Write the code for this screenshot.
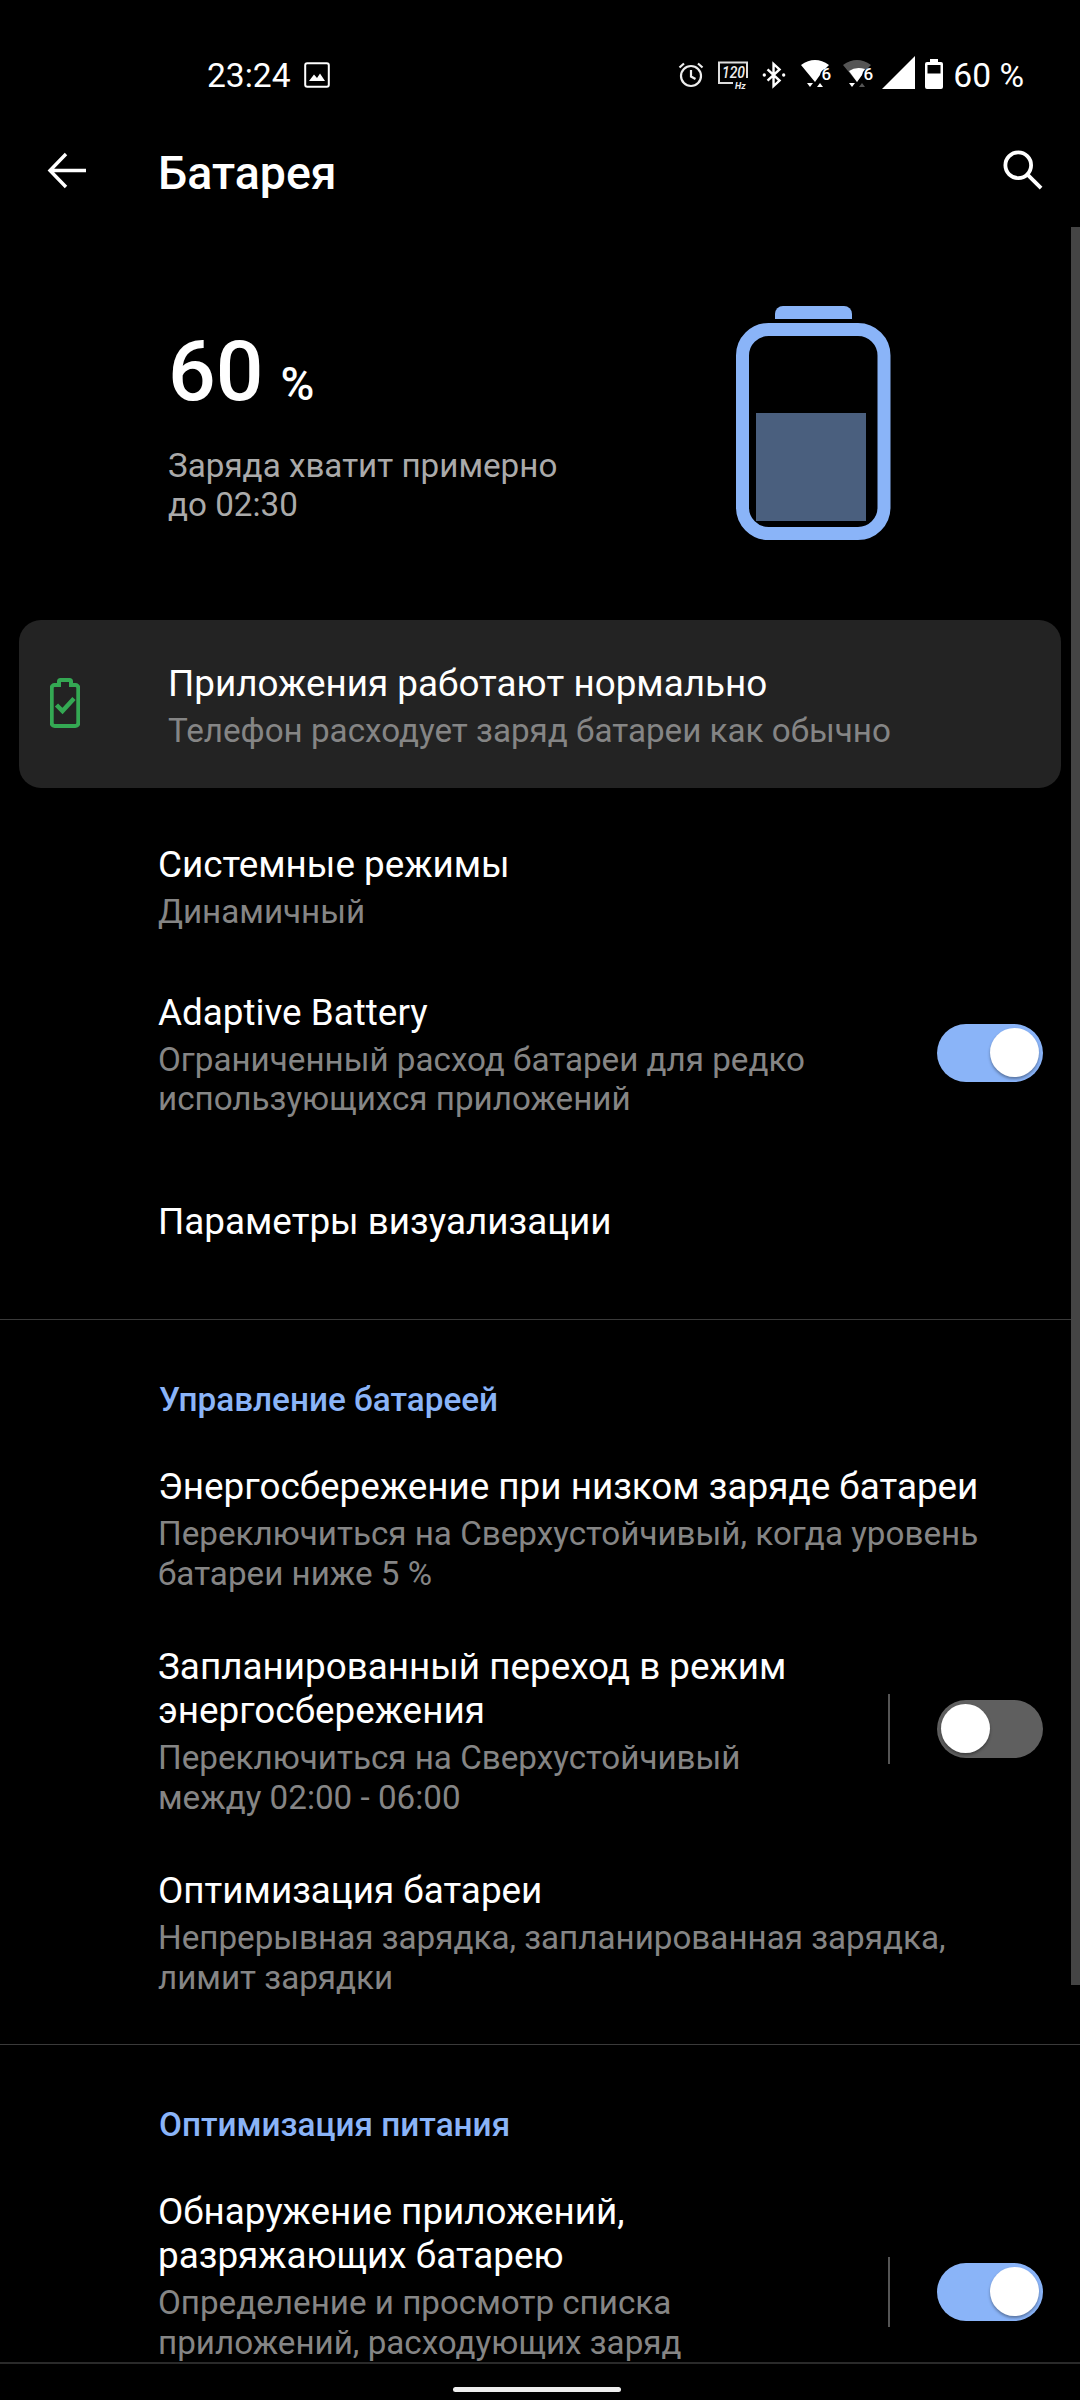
<div class="page">
  <header class="status">
    <div class="status-left">
      <span class="time">23:24</span>
      <svg class="ic-image" viewBox="0 0 26 26" width="26" height="26">
        <rect x="1.2" y="1.2" width="23.6" height="23.6" rx="2" fill="none" stroke="#fff" stroke-width="2"/>
        <path d="M5 19 L10 12.5 L13 16 L16 11.5 L21 19 Z" fill="#fff"/>
      </svg>
    </div>
    <div class="status-right">
      <svg class="s-alarm" viewBox="0 0 26 28" width="26" height="28" fill="none" stroke="#eee" stroke-width="2.2">
        <circle cx="13" cy="15" r="10"/>
        <path d="M13 9v6.5l4.500 2.500M1.500 6.500 6 2.500M24.500 6.500 20 2.500"/>
      </svg>
      <svg class="s-hz" viewBox="0 0 30 28" width="30" height="28">
        <path d="M15 22H1V1.500h28V17" fill="none" stroke="#ddd" stroke-width="2"/>
        <text x="4" y="17" class="t120" textLength="23" lengthAdjust="spacingAndGlyphs">120</text>
        <text x="17" y="27.500" class="thz">Hz</text>
      </svg>
      <svg class="s-bt" viewBox="0 0 26 28" width="24" height="26" fill="none" stroke="#fff" stroke-width="2.6">
        <path d="M6 8 L19 20 L12.500 26 V2 L19 8 L6 20"/>
        <circle cx="2.500" cy="14" r="1.800" fill="#fff" stroke="none"/>
        <circle cx="23.500" cy="14" r="1.800" fill="#fff" stroke="none"/>
      </svg>
      <svg class="s-wifi" viewBox="0 0 30 32" width="30" height="32">
        <path d="M0 7 Q14 -3 28 7 L24 11 Q20 12 19 17 L14 24 Z" fill="#fff"/>
        <text x="20.500" y="22" class="t6">6</text>
        <path d="M6 25h6l-3 4zM16 29l3-4 3 4z" fill="#fff"/>
      </svg>
      <svg class="s-wifi2" viewBox="0 0 30 32" width="30" height="32">
        <path d="M0 7 Q14 -3 28 7 L24 11 Q20 12 19 17 L14 24 Z" fill="#555"/>
        <path d="M6 13 Q13 8 22 11 Q20 13 19 17 L14 24 Z" fill="#fff"/>
        <text x="20.500" y="22" class="t6">6</text>
        <path d="M6 25h6l-3 4z" fill="#fff"/>
        <path d="M16 29l3-4 3 4z" fill="#555"/>
      </svg>
      <svg class="s-signal" viewBox="0 0 33 33" width="33" height="33"><path d="M0 33 L33 0 V33 Z" fill="#fff"/></svg>
      <svg class="s-batt" viewBox="0 0 18 30" width="18" height="30">
        <path d="M5 0h8v3h3a2 2 0 0 1 2 2v23a2 2 0 0 1-2 2H2a2 2 0 0 1-2-2V5a2 2 0 0 1 2-2h3z" fill="#fff"/>
        <rect x="2.500" y="6" width="13" height="8.500" fill="#000"/>
      </svg>
      <span class="pct">60 %</span>
    </div>
  </header>

  <div class="toolbar">
    <svg class="back" viewBox="0 0 40 40" width="40" height="40" fill="none" stroke="#fff" stroke-width="3.4">
      <path d="M39 19.500H3M19 3 3 19.500 19 36"/>
    </svg>
    <h1>Батарея</h1>
    <svg class="search" viewBox="0 0 42 42" width="40" height="40" fill="none" stroke="#fff" stroke-width="4">
      <circle cx="16" cy="16" r="13.500"/>
      <path d="M25.500 25.500 40 40"/>
    </svg>
  </div>

  <main class="content">
    <section class="hero">
      <div class="hero-text">
        <div class="level"><span class="num">60</span><span class="unit">%</span></div>
        <p class="estimate">Заряда хватит примерно<br />до 02:30</p>
      </div>
      <svg class="big-batt" viewBox="0 0 155 235" width="155" height="235">
        <path d="M39 13 V8 a8 8 0 0 1 8-8 H108 a8 8 0 0 1 8 8 V13 Z" fill="#8ab4f8"/>
        <rect x="6.500" y="23.500" width="141.500" height="204" rx="26" fill="none" stroke="#8ab4f8" stroke-width="13"/>
        <rect x="20" y="107" width="110" height="108" fill="#4a5f7e"/>
      </svg>
    </section>

    <section class="card">
      <svg class="card-ic" viewBox="0 0 30 50" width="30" height="50" fill="none" stroke="#34a853" stroke-width="4">
        <path d="M9 7V3.500a1.500 1.500 0 0 1 1.500-1.500h9a1.500 1.500 0 0 1 1.500 1.500V7h4.300a3 3 0 0 1 3 3v35a3 3 0 0 1-3 3H4.700a3 3 0 0 1-3-3V10a3 3 0 0 1 3-3z"/>
        <path d="M6.500 27l6 6 11.500-12.500" stroke-width="4.500"/>
      </svg>
      <div class="card-text">
        <div class="title">Приложения работают нормально</div>
        <div class="sub">Телефон расходует заряд батареи как обычно</div>
      </div>
    </section>

    <section class="group first">
      <div class="row">
        <div class="col">
          <div class="title">Системные режимы</div>
          <div class="sub">Динамичный</div>
        </div>
      </div>
      <div class="row r-adaptive">
        <div class="col">
          <div class="title">Adaptive Battery</div>
          <div class="sub">Ограниченный расход батареи для редко<br />использующихся приложений</div>
        </div>
        <span class="switch on"><span class="knob"></span></span>
      </div>
      <div class="row r-vis">
        <div class="col"><div class="title">Параметры визуализации</div></div>
      </div>
    </section>

    <section class="group bordered manage">
      <h2>Управление батареей</h2>
      <div class="row r-low">
        <div class="col">
          <div class="title">Энергосбережение при низком заряде батареи</div>
          <div class="sub">Переключиться на Сверхустойчивый, когда уровень<br />батареи ниже 5 %</div>
        </div>
      </div>
      <div class="row r-next">
        <div class="col">
          <div class="title">Запланированный переход в режим<br />энергосбережения</div>
          <div class="sub">Переключиться на Сверхустойчивый<br />между 02:00 - 06:00</div>
        </div>
        <span class="vline"></span>
        <span class="switch"><span class="knob"></span></span>
      </div>
      <div class="row r-next">
        <div class="col">
          <div class="title">Оптимизация батареи</div>
          <div class="sub">Непрерывная зарядка, запланированная зарядка,<br />лимит зарядки</div>
        </div>
      </div>
    </section>

    <section class="group bordered">
      <h2>Оптимизация питания</h2>
      <div class="row r-low r-detect">
        <div class="col">
          <div class="title">Обнаружение приложений,<br />разряжающих батарею</div>
          <div class="sub">Определение и просмотр списка<br />приложений, расходующих заряд</div>
        </div>
        <span class="vline"></span>
        <span class="switch on"><span class="knob"></span></span>
      </div>
    </section>
  </main>

  <footer class="navbar"><span class="pill"></span></footer>
  <span class="scrollbar"></span>
</div>

<style>
  :global(body) { margin: 0; background: #000; }
  .page {
    position: relative;
    width: 1080px;
    height: 2400px;
    background: #000;
    color: #fff;
    font-family: Roboto, "Noto Sans", sans-serif;
    display: flex;
    flex-direction: column;
    overflow: hidden;
  }
  .status {
    height: 130px;
    flex: none;
    box-sizing: border-box;
    padding: 54px 56px 0 207px;
    display: flex;
    justify-content: space-between;
    align-items: flex-start;
  }
  .status-left { display: flex; align-items: center; gap: 13px; height: 42px; }
  .time { font-size: 33.6px; }
  .status-right { display: flex; align-items: center; height: 42px; }
  .status-right svg { overflow: visible; }
  .s-hz { margin-left: 14px; }
  .s-bt { margin-left: 14px; }
  .s-wifi { margin-left: 15px; margin-top: -2px; }
  .s-wifi2 { margin-left: 12px; margin-top: -2px; }
  .s-signal { margin-left: 9px; margin-top: -5px; }
  .s-batt { margin-left: 10px; margin-top: -3px; }
  .pct { font-size: 33.6px; margin-left: 10px; }
  .t120 { font: italic 500 17px Roboto, sans-serif; fill: #eee; }
  .thz { font: italic 700 9px Roboto, sans-serif; fill: #eee; }
  .t6 { font: 500 17px Roboto, sans-serif; fill: #fff; }
  .toolbar {
    height: 86px;
    flex: none;
    display: flex;
    align-items: center;
    padding-left: 47px;
  }
  .back { margin-right: 71px; margin-top: -4px; }
  h1 { margin: 0; font-size: 46.5px; font-weight: 500; flex: 1; }
  .search { margin-right: 37px; margin-top: -6px; }
  .content { flex: 1; min-height: 0; overflow: hidden; }
  .hero {
    height: 404px;
    box-sizing: border-box;
    padding: 90px 189px 0 168px;
    display: flex;
    justify-content: space-between;
    align-items: flex-start;
  }
  .level { display: flex; align-items: baseline; height: 100px; margin-top: 16px; }
  .num { font-size: 84px; font-weight: 500; line-height: 100px; }
  .unit { font-size: 46px; font-weight: 500; margin-left: 17px; }
  .estimate { margin: 24px 0 0; font-size: 33.2px; line-height: 39px; color: #aaa; }
  .card {
    margin: 0 19px;
    height: 168px;
    border-radius: 22px;
    background: #232323;
    display: flex;
    align-items: center;
    padding-left: 31px;
  }
  .card-ic { margin-right: 88px; margin-top: -2px; }
  .card-text { padding-top: 4px; }
  .title { font-size: 36.85px; line-height: 44px; color: #fff; white-space: nowrap; }
  .sub { font-size: 33.2px; line-height: 39.5px; color: #858585; margin-top: 5px; white-space: nowrap; }
  .group.first { height: 531px; box-sizing: border-box; padding-top: 55px; }
  .bordered { border-top: 1px solid #3a3a3a; }
  .manage { padding-bottom: 47px; }
  h2 {
    margin: 0;
    padding: 62px 0 0 159px;
    font-size: 33.3px;
    line-height: 36px;
    font-weight: 500;
    color: #8ab4f8;
  }
  .row { display: flex; align-items: center; padding: 0 37px 0 158px; }
  .col { flex: 1; min-width: 0; }
  .r-adaptive { margin-top: 59px; }
  .r-vis { margin-top: 81px; }
  .r-low { margin-top: 47px; }
  .r-next { margin-top: 52px; }
  .r-adaptive .switch, .r-next .switch, .r-next .vline { margin-top: -4px; }
  .r-detect .col { padding-bottom: 32px; }
  .vline { width: 2px; height: 70px; background: #555; margin-right: 47px; flex: none; }
  .switch {
    position: relative;
    width: 106px;
    height: 58px;
    border-radius: 29px;
    background: #5f5f5f;
    flex: none;
  }
  .switch.on { background: #8ab4f8; }
  .knob {
    position: absolute;
    top: 4px;
    left: 4px;
    width: 49px;
    height: 49px;
    border-radius: 50%;
    background: #fff;
    box-shadow: 0 2px 3px rgba(0, 0, 0, 0.35);
  }
  .switch.on .knob { left: 53px; }
  .navbar {
    position: absolute;
    left: 0;
    right: 0;
    bottom: 0;
    height: 38px;
    background: #000;
    border-top: 2px solid #2a2a2a;
    display: flex;
    justify-content: center;
    box-sizing: border-box;
  }
  .pill {
    width: 168px;
    height: 5px;
    border-radius: 3px;
    background: #eee;
    margin: 23px 6px 0 0;
  }
  .scrollbar {
    position: absolute;
    right: 0;
    top: 227px;
    width: 9px;
    height: 1758px;
    background: #444;
  }
</style>
